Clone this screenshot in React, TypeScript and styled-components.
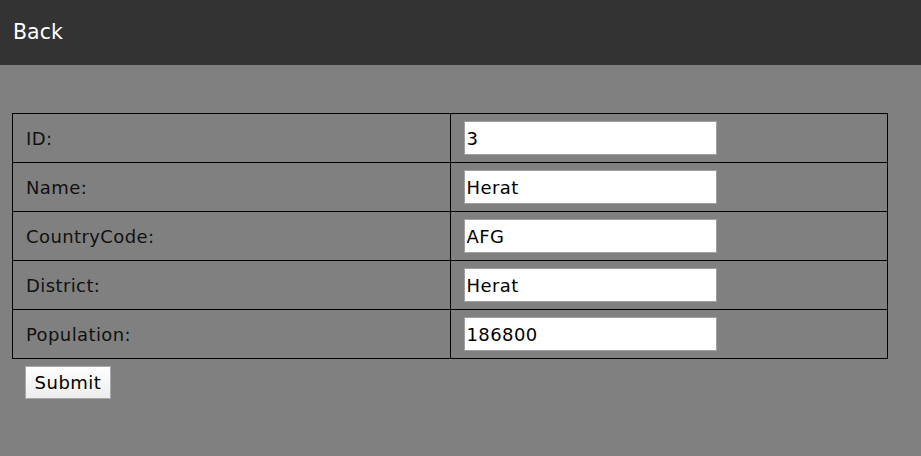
import styled, { createGlobalStyle } from 'styled-components';

const GlobalStyle = createGlobalStyle`
  html, body {
    margin: 0;
    padding: 0;
    background: #808080;
    font-family: "DejaVu Sans", Verdana, sans-serif;
  }
`;

const fields = [
  { label: 'ID:', value: '3' },
  { label: 'Name:', value: 'Herat' },
  { label: 'CountryCode:', value: 'AFG' },
  { label: 'District:', value: 'Herat' },
  { label: 'Population:', value: '186800' },
];

export default function App() {
  return (
    <>
      <GlobalStyle />
      <Header>
        <BackLink href="#">Back</BackLink>
      </Header>
      <Form onSubmit={(e) => e.preventDefault()}>
        <Table>
          <tbody>
            {fields.map((f) => (
              <tr key={f.label}>
                <LabelCell>{f.label}</LabelCell>
                <InputCell>
                  <TextInput type="text" defaultValue={f.value} />
                </InputCell>
              </tr>
            ))}
          </tbody>
        </Table>
        <SubmitButton type="submit">Submit</SubmitButton>
      </Form>
    </>
  );
}

const Header = styled.header`
  display: flex;
  align-items: center;
  height: 65px;
  padding: 0 13px;
  background: #333333;
`;

const BackLink = styled.a`
  color: #ffffff;
  font-size: 20.5px;
  text-decoration: none;
  margin-top: -1px;
`;

const Form = styled.form`
  padding: 48px 12px 0;
`;

const Table = styled.table`
  width: 876px;
  border-collapse: collapse;
  border: 1px solid #000;
  table-layout: fixed;
`;

const LabelCell = styled.td`
  width: 50%;
  height: 48px;
  padding: 0 13px;
  border: 1px solid #000;
  color: #111;
  font-size: 18px;
  letter-spacing: 0.4px;
  vertical-align: middle;
`;

const InputCell = styled(LabelCell)`
  padding: 0 13px;
`;

const TextInput = styled.input`
  display: block;
  box-sizing: border-box;
  width: 253px;
  height: 34px;
  padding: 0 2px;
  border: 1px solid #a0a0a0;
  background: #fff;
  color: #000;
  font-family: "DejaVu Sans", Verdana, sans-serif;
  font-size: 18px;
  letter-spacing: 0.4px;
  outline: none;
`;

const SubmitButton = styled.button`
  display: block;
  margin: 7px 0 0 13px;
  height: 33px;
  width: 86px;
  padding: 0;
  border: 1px solid #a8a8a8;
  background: linear-gradient(#ffffff, #ededed);
  color: #000;
  font-family: "DejaVu Sans", Verdana, sans-serif;
  font-size: 18px;
  letter-spacing: 0.5px;
`;
